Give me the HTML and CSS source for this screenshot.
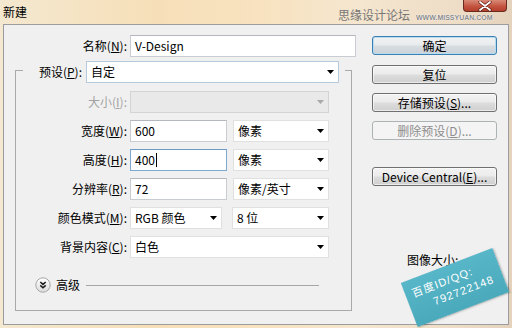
FILE: index.html
```html
<!DOCTYPE html>
<html lang="zh">
<head>
<meta charset="utf-8">
<title>新建</title>
<link rel="stylesheet" href="styles.css">
</head>
<body>
<div class="window">
  <div class="titlebar">
    <span class="title">新建</span>
    <span class="close">
      <svg width="14" height="10" viewBox="0 0 14 10"><path d="M2 1 L12 9 M12 1 L2 9" stroke="#5a1a10" stroke-width="3.2" stroke-linecap="round"/><path d="M2 1 L12 9 M12 1 L2 9" stroke="#fff" stroke-width="1.8" stroke-linecap="round"/></svg>
    </span>
  </div>
  <div class="wm-title"><span class="wm-cn">思缘设计论坛</span><span class="wm-en">WWW.MISSYUAN.COM</span></div>

  <div class="panel">
    <div class="form">
      <div class="row name">
        <span class="lbl">名称(<u>N</u>):</span>
        <div class="ctrl input w-name">V-Design</div>
      </div>

      <fieldset class="group">
        <legend class="legend">
          <div class="row">
            <span class="lbl lbl-preset">预设(<u>P</u>):</span>
            <div class="ctrl select w-preset">自定<i class="arrow"></i></div>
          </div>
        </legend>

        <div class="row grow first">
          <span class="lbl disabled">大小(<u>I</u>):</span>
          <div class="ctrl select dis w-full"><i class="arrow"></i></div>
        </div>
        <div class="row grow">
          <span class="lbl">宽度(<u>W</u>):</span>
          <div class="ctrl input w-num">600</div>
          <div class="ctrl select w-unit">像素<i class="arrow"></i></div>
        </div>
        <div class="row grow">
          <span class="lbl">高度(<u>H</u>):</span>
          <div class="ctrl input focus w-num">400<span class="caret"></span></div>
          <div class="ctrl select w-unit">像素<i class="arrow"></i></div>
        </div>
        <div class="row grow">
          <span class="lbl">分辨率(<u>R</u>):</span>
          <div class="ctrl input w-num">72</div>
          <div class="ctrl select w-unit">像素/英寸<i class="arrow"></i></div>
        </div>
        <div class="row grow">
          <span class="lbl">颜色模式(<u>M</u>):</span>
          <div class="ctrl select w-mode">RGB 颜色<i class="arrow"></i></div>
          <div class="ctrl select w-bits">8 位<i class="arrow"></i></div>
        </div>
        <div class="row grow">
          <span class="lbl">背景内容(<u>C</u>):</span>
          <div class="ctrl select w-full">白色<i class="arrow"></i></div>
        </div>

        <div class="adv">
          <svg class="adv-icon" width="16" height="16" viewBox="0 0 16 16">
            <defs><linearGradient id="g" x1="0" y1="0" x2="0" y2="1"><stop offset="0" stop-color="#ffffff"/><stop offset="1" stop-color="#dcdcdc"/></linearGradient></defs>
            <circle cx="8" cy="8" r="7.2" fill="url(#g)" stroke="#a6a6a6" stroke-width="1"/>
            <path d="M5.3 5 L8 7.4 L10.7 5 M5.3 8.4 L8 10.8 L10.7 8.4" fill="none" stroke="#1a1a1a" stroke-width="1.5"/>
          </svg>
          <span class="adv-text">高级</span>
          <span class="adv-rule"></span>
        </div>
      </fieldset>
    </div>

    <div class="buttons">
      <button class="btn default">确定</button>
      <button class="btn b2">复位</button>
      <button class="btn b3">存储预设(<u>S</u>)...</button>
      <button class="btn b4 disabled-btn">删除预设(<u>D</u>)...</button>
      <button class="btn b5">Device Central(<u>E</u>)...</button>
      <div class="info">图像大小:</div>
    </div>
  </div>

  <div class="stamp">
    <div class="st1">百度ID/QQ:</div>
    <div class="st2">792722148</div>
  </div>
</div>
</body>
</html>
```

FILE: styles.css
```css
* { box-sizing: border-box; }

body {
  margin: 0;
  width: 512px;
  height: 328px;
  overflow: hidden;
  font-family: "Noto Sans CJK SC", "Noto Sans", sans-serif;
  font-size: 12px;
  color: #000;
}

.window {
  position: relative;
  width: 512px;
  height: 328px;
  overflow: hidden;
  background: linear-gradient(90deg, #f4e8d0 0%, #f6dfb8 30%, #f8e2bf 50%, #f5e6cf 70%, #eddcc6 90%, #e4d2bd 100%);
}

.titlebar {
  height: 24px;
  display: flex;
  align-items: flex-start;
}

.title {
  margin: 4px 0 0 3px;
  line-height: 16px;
  font-size: 12px;
}

.close {
  margin-left: auto;
  margin-right: 5px;
  width: 44px;
  height: 12px;
  border: 1px solid #6b2a1e;
  border-top: none;
  border-radius: 0 0 4px 4px;
  background: linear-gradient(#d88a78, #c2513d 60%, #b3402c);
  display: flex;
  justify-content: center;
  align-items: flex-start;
  padding-top: 1px;
}

.wm-title {
  position: absolute;
  left: 338px;
  top: 7px;
  display: flex;
  align-items: center;
  gap: 6px;
  color: #777;
  white-space: nowrap;
  pointer-events: none;
  z-index: 2;
}

.wm-cn {
  flex: none;
  font-size: 12px;
  line-height: 16px;
}

.wm-en {
  flex: none;
  margin-top: 5px;
  font-family: "Liberation Sans", sans-serif;
  font-size: 7px;
  font-weight: bold;
  letter-spacing: 0;
  color: #8a8a8a;
  text-shadow: 0 0 1px #fff, 0 0 1px #fff;
}

.panel {
  margin-left: 3px;
  width: 506px;
  height: 301px;
  border: 1px solid #9c9c9c;
  background: #f0f0f0;
  display: flex;
}

.form {
  width: 352px;
  padding-top: 10px;
}

.row {
  display: flex;
  align-items: center;
  height: 22px;
}

.lbl {
  text-align: right;
  white-space: nowrap;
  line-height: 22px;
}

.lbl u { text-underline-offset: 1px; }

.name .lbl {
  width: 123px;
  margin-right: 3px;
}

.ctrl {
  height: 22px;
  border: 1px solid #d2d4d8;
  background: #fff;
  padding-left: 4px;
  line-height: 20px;
  white-space: nowrap;
  display: flex;
  align-items: center;
}

.input {
  border-color: #c9ccd2;
  border-top-color: #b4b7bd;
}

.input.focus {
  border-color: #7ea8d2;
  border-top-color: #6d9ac8;
}

.caret {
  display: inline-block;
  width: 1px;
  height: 14px;
  background: #000;
  margin-left: 1px;
}

.select {
  border-color: #e0e0e0;
}

.select.dis {
  background: #e9e9e9;
  border-color: #d3d3d3;
}

.arrow {
  margin-left: auto;
  margin-right: 4px;
  width: 7px;
  height: 4px;
  background: #000;
  clip-path: polygon(0 0, 100% 0, 50% 100%);
}

.dis .arrow { background: #a8a8a8; }

.w-name { width: 226px; }
.w-preset { width: 253px; border-color: #b5c9dc; }
.w-full { width: 199px; }
.w-num { width: 97px; }
.w-unit { width: 96px; margin-left: 6px; }
.w-mode { width: 92px; }
.w-bits { width: 97px; margin-left: 10px; }

.group {
  margin: 1px 0 0 11px;
  width: 337px;
  border: 1px solid #a9a9a9;
  padding: 0 0 17px 0;
  min-width: 0;
}

.legend {
  margin-left: 7px;
  padding: 3px 6px 0 0;
}

.lbl-preset {
  width: 59px;
  margin-right: 4px;
}

.grow { margin-top: 7px; }
.grow.first { margin-top: 8px; }

.grow .lbl {
  width: 111px;
  margin-right: 3px;
}

.lbl.disabled { color: #a3a3a3; }

.adv {
  margin-top: 19px;
  height: 16px;
  padding-left: 19px;
  display: flex;
  align-items: center;
}

.adv-icon { flex: none; }

.adv-text {
  margin-left: 5px;
  line-height: 16px;
}

.adv-rule {
  margin-left: 6px;
  width: 233px;
  height: 1px;
  background: #a6a6a6;
}

.buttons {
  margin-left: 16px;
  width: 125px;
  padding-top: 11px;
  display: flex;
  flex-direction: column;
}

.btn {
  height: 19px;
  width: 125px;
  padding: 0;
  font-family: "Noto Sans CJK SC", "Noto Sans", sans-serif;
  font-size: 12px;
  line-height: 17px;
  color: #000;
  border: 1px solid #707070;
  border-radius: 3px;
  background: linear-gradient(#f3f3f3 0%, #ebebeb 48%, #dddddd 52%, #cfcfcf 100%);
  box-shadow: inset 0 0 0 1px rgba(255,255,255,0.6);
  text-align: center;
}

.btn.default {
  border-color: #3c7fb1;
  box-shadow: inset 0 0 0 1px #b6dcf2;
  background: linear-gradient(#f2f2f2 0%, #e8ebee 48%, #d8dde2 52%, #cbd1d6 100%);
}

.b2 { margin-top: 10px; }
.b3 { margin-top: 9px; }
.b4 { margin-top: 9px; }
.b5 { margin-top: 27px; }

.disabled-btn {
  color: #8d8d8d;
  border-color: #adb2b5;
  background: #f4f4f4;
  box-shadow: none;
}

.info {
  margin-top: 66px;
  margin-left: 35px;
  line-height: 16px;
}

.stamp {
  position: absolute;
  left: 406px;
  top: 264px;
  width: 98px;
  height: 47px;
  transform: rotate(-21deg);
  background: linear-gradient(#57b6c7, #4aaabb);
  box-shadow: 1px 1px 2px rgba(0,0,0,0.25);
  color: #fff;
  font-family: "Liberation Sans", "Noto Sans CJK SC", sans-serif;
  font-size: 11px;
  letter-spacing: 1px;
  line-height: 15px;
  padding-top: 7px;
  white-space: nowrap;
}

.st1 { padding-left: 7px; }
.st2 { padding-left: 24px; }
```
